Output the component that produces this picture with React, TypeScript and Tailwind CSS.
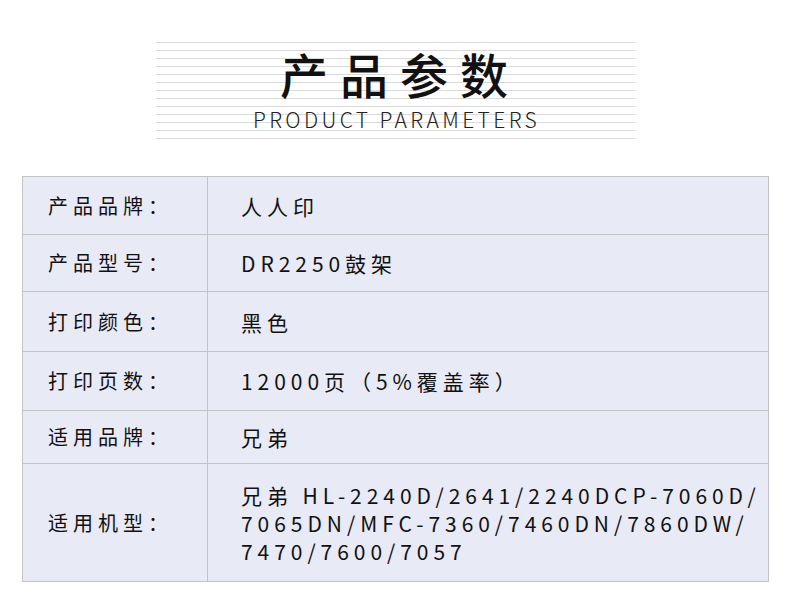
const rows: { label: string; value: React.ReactNode; h: string }[] = [
  { label: "产品品牌：", value: "人人印", h: "h-[57px]" },
  { label: "产品型号：", value: "DR2250鼓架", h: "h-[57px]" },
  { label: "打印颜色：", value: "黑色", h: "h-[60px]" },
  { label: "打印页数：", value: "12000页（5%覆盖率）", h: "h-[59px]" },
  { label: "适用品牌：", value: "兄弟", h: "h-[53px]" },
  {
    label: "适用机型：",
    value: (
      <>
        兄弟 HL-2240D/2641/2240DCP-7060D/
        <br />
        7065DN/MFC-7360/7460DN/7860DW/
        <br />
        7470/7600/7057
      </>
    ),
    h: "h-[118px]",
  },
];

export default function App() {
  return (
    <div className="h-[596px] w-[790px] bg-white font-['Noto_Sans_CJK_SC','Noto_Sans',sans-serif] text-[#111]">
      <div className="pt-[42px]">
        <div className="mx-auto flex h-[97px] w-[479px] flex-col items-center bg-[repeating-linear-gradient(to_bottom,#dadada_0,#dadada_1px,transparent_1px,transparent_8px)]">
          <h1 className="mt-[8px] pl-[10px] text-[48px] font-medium leading-[46px] tracking-[12px] text-[#111]">
            产品参数
          </h1>
          <div className="mt-[10px] pl-[3px] text-[21px] font-light leading-[26px] tracking-[3.4px] text-[#222]">
            PRODUCT PARAMETERS
          </div>
        </div>
      </div>
      <div className="ml-[22px] mt-[37px] w-[747px] border border-[#c3c3c3] bg-[#e8eaf6]">
        {rows.map((r, i) => (
          <div
            key={i}
            className={`flex ${r.h} ${i > 0 ? "border-t border-[#c3c3c3]" : ""}`}
          >
            <div className="flex w-[185px] items-center border-r border-[#c3c3c3] pl-[25px] text-[20px] tracking-[5px]">
              {r.label}
            </div>
            <div className="flex flex-1 items-center pl-[33px] text-[21px] leading-[28px] tracking-[4.95px]">
              <div>{r.value}</div>
            </div>
          </div>
        ))}
      </div>
    </div>
  );
}
